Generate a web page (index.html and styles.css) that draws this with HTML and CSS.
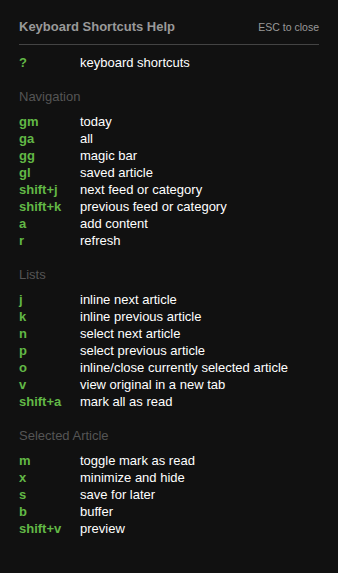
FILE: index.html
```html
<!DOCTYPE html>
<html lang="en">
<head>
    <meta charset="UTF-8">
    <meta name="viewport" content="width=device-width, initial-scale=1.0">
    <title>Keyboard Shortcuts Help</title>
    <link rel="stylesheet" href="styles.css">
</head>
<body>
    <div class="help">
        <div class="help-header">
            <h2>Keyboard Shortcuts Help</h2>
            <span class="close-hint">ESC to close</span>
        </div>

        <table class="keys first">
            <tr><td class="key">?</td><td>keyboard shortcuts</td></tr>
        </table>

        <h3>Navigation</h3>
        <table class="keys">
            <tr><td class="key">gm</td><td>today</td></tr>
            <tr><td class="key">ga</td><td>all</td></tr>
            <tr><td class="key">gg</td><td>magic bar</td></tr>
            <tr><td class="key">gl</td><td>saved article</td></tr>
            <tr><td class="key">shift+j</td><td>next feed or category</td></tr>
            <tr><td class="key">shift+k</td><td>previous feed or category</td></tr>
            <tr><td class="key">a</td><td>add content</td></tr>
            <tr><td class="key">r</td><td>refresh</td></tr>
        </table>

        <h3>Lists</h3>
        <table class="keys">
            <tr><td class="key">j</td><td>inline next article</td></tr>
            <tr><td class="key">k</td><td>inline previous article</td></tr>
            <tr><td class="key">n</td><td>select next article</td></tr>
            <tr><td class="key">p</td><td>select previous article</td></tr>
            <tr><td class="key">o</td><td>inline/close currently selected article</td></tr>
            <tr><td class="key">v</td><td>view original in a new tab</td></tr>
            <tr><td class="key">shift+a</td><td>mark all as read</td></tr>
        </table>

        <h3>Selected Article</h3>
        <table class="keys">
            <tr><td class="key">m</td><td>toggle mark as read</td></tr>
            <tr><td class="key">x</td><td>minimize and hide</td></tr>
            <tr><td class="key">s</td><td>save for later</td></tr>
            <tr><td class="key">b</td><td>buffer</td></tr>
            <tr><td class="key">shift+v</td><td>preview</td></tr>
        </table>
    </div>
</body>
</html>
```

FILE: styles.css
```css
body {
    margin: 0;
    background-color: #111;
    font-family: "Liberation Sans", Arial, sans-serif;
    font-size: 13px;
    color: #fff;
}

.help {
    padding: 0 19px;
}

.help-header {
    display: flex;
    justify-content: space-between;
    align-items: baseline;
    padding: 18px 0 9px;
    border-bottom: 1px solid #444;
}

.help-header h2 {
    margin: 0;
    font-size: 13px;
    line-height: 17px;
    font-weight: bold;
    color: #999;
}

.close-hint {
    font-size: 10.5px;
    color: #999;
}

h3 {
    margin: 17px 0 8px;
    font-size: 13px;
    line-height: 17px;
    font-weight: normal;
    color: #555;
}

table.keys {
    border-collapse: collapse;
}

table.first {
    margin-top: 9px;
}

table.keys td {
    padding: 0;
    height: 17px;
    line-height: 17px;
    white-space: nowrap;
}

td.key {
    width: 61px;
    font-weight: bold;
    color: #62b846;
}
```
